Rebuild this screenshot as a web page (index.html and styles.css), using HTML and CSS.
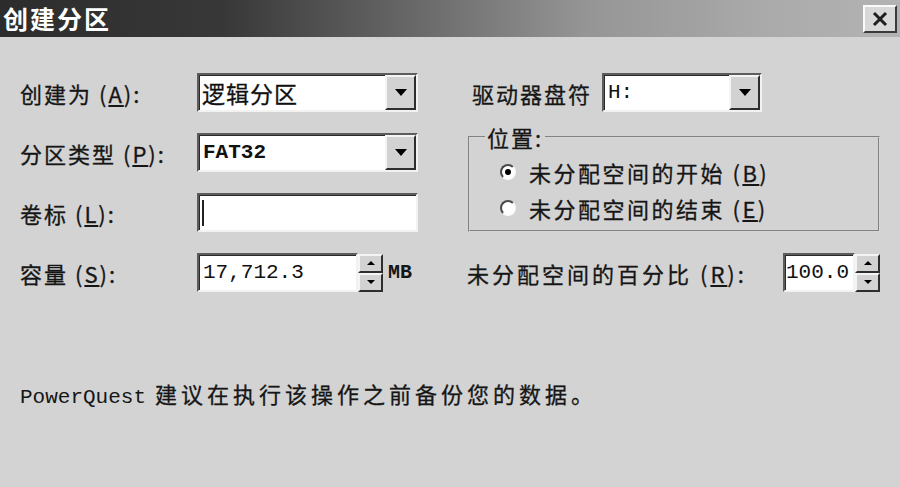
FILE: index.html
```html
<!DOCTYPE html>
<html lang="zh-CN">
<head>
    <meta charset="UTF-8">
    <meta name="viewport" content="width=device-width, initial-scale=1.0">
    <title>创建分区</title>
    <link rel="stylesheet" href="styles.css">
</head>
<body>
    <div class="window">
        <!-- Title bar -->
        <div class="titlebar">
            <span class="title">创建分区</span>
            <button class="close" type="button" aria-label="关闭">
                <svg width="18" height="16" viewBox="0 0 18 16">
                    <path d="M3 2 L15 14 M15 2 L3 14" stroke="#1e1e1e" stroke-width="3" fill="none"/>
                </svg>
            </button>
        </div>

        <div class="content">
            <div class="fields">
                <!-- Row 1 -->
                <span class="label">创建为 (<u>A</u>):</span>
                <div class="combo">
                    <span class="value cjk">逻辑分区</span>
                    <span class="drop"></span>
                </div>
                <div class="drive">
                    <span class="label">驱动器盘符</span>
                    <div class="combo small">
                        <span class="value">H:</span>
                        <span class="drop"></span>
                    </div>
                </div>

                <!-- Row 2 -->
                <span class="label">分区类型 (<u>P</u>):</span>
                <div class="combo">
                    <span class="value bold">FAT32</span>
                    <span class="drop"></span>
                </div>
                <fieldset class="group">
                    <legend>位置:</legend>
                    <div class="radio-row">
                        <span class="radio checked"></span>
                        <span class="radio-text">未分配空间的开始 (<u>B</u>)</span>
                    </div>
                    <div class="radio-row">
                        <span class="radio"></span>
                        <span class="radio-text">未分配空间的结束 (<u>E</u>)</span>
                    </div>
                </fieldset>

                <!-- Row 3 -->
                <span class="label">卷标 (<u>L</u>):</span>
                <div class="textbox">
                    <span class="caret"></span>
                </div>

                <!-- Row 4 -->
                <span class="label">容量 (<u>S</u>):</span>
                <div class="spinbox">
                    <div class="textbox size">
                        <span class="value">17,712.3</span>
                    </div>
                    <div class="spin">
                        <span class="up"></span>
                        <span class="down"></span>
                    </div>
                    <span class="unit">MB</span>
                </div>
                <div class="percent">
                    <span class="label">未分配空间的百分比 (<u>R</u>):</span>
                    <div class="spinbox">
                        <div class="textbox pct">
                            <span class="value">100.0</span>
                        </div>
                        <div class="spin">
                            <span class="up"></span>
                            <span class="down"></span>
                        </div>
                    </div>
                </div>
            </div>

            <p class="note"><span class="mono">PowerQuest</span> 建议在执行该操作之前备份您的数据。</p>
        </div>
    </div>
</body>
</html>
```

FILE: styles.css
```css
* {
    box-sizing: border-box;
}

body {
    margin: 0;
    background: #d3d3d3;
    font-family: "Noto Sans CJK SC", sans-serif;
    color: #161616;
}

.window {
    width: 900px;
    height: 487px;
    display: flex;
    flex-direction: column;
    overflow: hidden;
}

/* Title bar */
.titlebar {
    height: 37px;
    flex: none;
    display: flex;
    align-items: center;
    justify-content: space-between;
    padding: 0 3px 0 3px;
    background: linear-gradient(to right, #2c2c2c 0%, #383838 25%, #666 45%, #959595 65%, #aaa 85%, #b3b3b3 100%);
}

.title {
    color: #fff;
    font-size: 25px;
    font-weight: 700;
    letter-spacing: 2px;
    line-height: 1;
}

.close {
    width: 34px;
    height: 28px;
    padding: 0;
    display: flex;
    align-items: center;
    justify-content: center;
    background: #d8d8d8;
    border: 2px solid;
    border-color: #fafafa #3a3a3a #3a3a3a #fafafa;
}

/* Form area */
.content {
    flex: 1;
    padding: 36px 0 0 20px;
}

.fields {
    display: grid;
    grid-template-columns: 177px 221px 49px 413px;
    grid-template-rows: 39px 39px 39px 39px;
    row-gap: 21px;
    align-items: center;
}

.label, .radio-text, .group legend, .note {
    -webkit-text-stroke: 0.3px currentColor;
}

.label {
    font-size: 22px;
    letter-spacing: 2px;
    line-height: 1;
    white-space: nowrap;
}

.fields > .label {
    grid-column: 1;
}

u {
    text-underline-offset: 2px;
}

.combo, .textbox {
    height: 39px;
    display: flex;
    align-items: center;
    background: #fff;
    border: 2px solid;
    border-color: #5c5c5c #f2f2f2 #f2f2f2 #5c5c5c;
    box-shadow: inset 1px 1px 0 #2a2a2a;
}

.combo .value {
    flex: 1;
}

.value {
    padding-left: 4px;
    font-family: "Liberation Mono", monospace;
    font-size: 21px;
    color: #111;
}

.value.cjk {
    font-family: "Noto Sans CJK SC", sans-serif;
    font-size: 23px;
    letter-spacing: 1px;
    padding-left: 3px;
    -webkit-text-stroke: 0.3px currentColor;
}

.value.bold {
    font-weight: 700;
}

.drop {
    width: 31px;
    height: 100%;
    display: flex;
    align-items: center;
    justify-content: center;
    background: #d2d2d2;
    border: 2px solid;
    border-color: #f4f4f4 #2e2e2e #2e2e2e #f4f4f4;
}

.drop::after {
    content: "";
    border-left: 6px solid transparent;
    border-right: 6px solid transparent;
    border-top: 7px solid #000;
}

.drive {
    grid-column: 4;
    display: flex;
    align-items: center;
    gap: 10px;
    padding-left: 5px;
}

.combo.small {
    width: 160px;
}

/* Position group */
.group {
    grid-column: 4;
    grid-row: 2 / span 2;
    align-self: start;
    margin: -8px 0 0 1px;
    height: 107px;
    padding: 5px 0 0 15px;
    border: 2px groove #d6d6d6;
}

.group legend {
    padding: 0 2px;
    font-size: 22px;
    letter-spacing: 2px;
    line-height: 24px;
}

.radio-row {
    height: 36px;
    display: flex;
    align-items: center;
    gap: 13px;
    padding-left: 15px;
}

.radio {
    width: 16px;
    height: 16px;
    border-radius: 50%;
    background: #fff;
    border: 2px solid;
    border-color: #4a4a4a #fafafa #fafafa #4a4a4a;
    display: flex;
    align-items: center;
    justify-content: center;
}

.radio.checked::after {
    content: "";
    width: 6px;
    height: 6px;
    border-radius: 50%;
    background: #000;
}

.radio-text {
    font-size: 22px;
    letter-spacing: 2.5px;
    line-height: 1;
}

/* Text boxes */
.caret {
    width: 2px;
    height: 26px;
    margin-left: 3px;
    background: #222;
}

.spinbox {
    display: flex;
    align-items: center;
}

.textbox.size {
    width: 161px;
}

.textbox.pct {
    width: 72px;
}

.textbox.pct .value {
    padding-left: 1px;
}

.spin {
    width: 25px;
    height: 38px;
    display: flex;
    flex-direction: column;
}

.spin span {
    flex: 1;
    display: flex;
    align-items: center;
    justify-content: center;
    background: #d2d2d2;
    border: 2px solid;
    border-color: #f4f4f4 #2e2e2e #2e2e2e #f4f4f4;
}

.spin .up::after {
    content: "";
    border-left: 4px solid transparent;
    border-right: 4px solid transparent;
    border-bottom: 4px solid #000;
}

.spin .down::after {
    content: "";
    border-left: 4px solid transparent;
    border-right: 4px solid transparent;
    border-top: 4px solid #000;
}

.unit {
    margin-left: 5px;
    font-family: "Liberation Mono", monospace;
    font-size: 20px;
    font-weight: 700;
}

.percent {
    grid-column: 4;
    display: flex;
    align-items: center;
    justify-content: space-between;
}

.percent .label {
    letter-spacing: 3px;
}

/* Footer note */
.note {
    margin: 86px 0 0 0;
    font-size: 22px;
    letter-spacing: 4px;
    line-height: 30px;
}

.note .mono {
    font-family: "Liberation Mono", monospace;
    font-size: 21px;
    letter-spacing: 0;
    -webkit-text-stroke: 0;
}
```
